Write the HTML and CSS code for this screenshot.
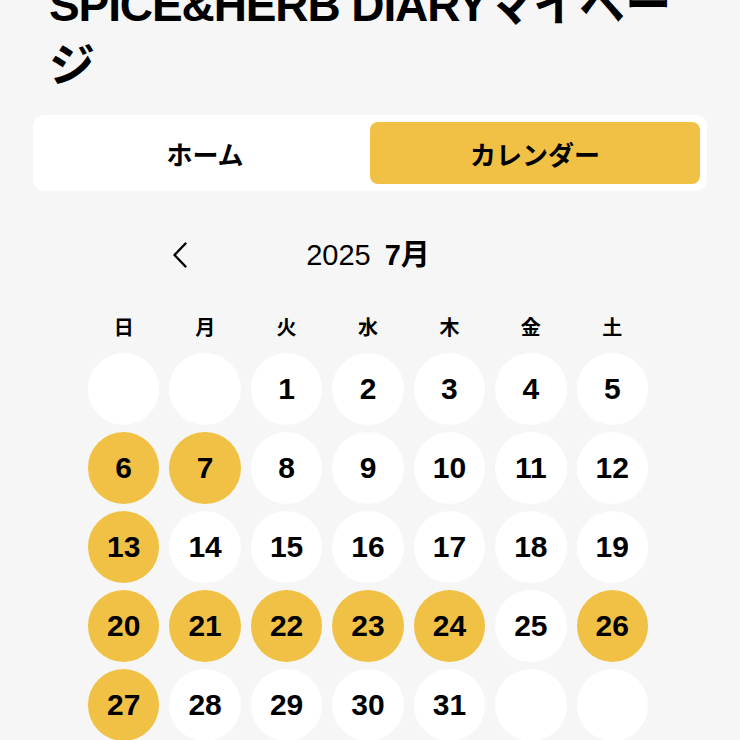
FILE: index.html
```html
<!DOCTYPE html>
<html lang="ja">
<head>
<meta charset="utf-8">
<title>SPICE&amp;HERB DIARYマイページ</title>
<link rel="stylesheet" href="styles.css">
</head>
<body>
<main class="page">
  <h1 class="page-title"><span class="latin">SPICE&amp;HERB DIARY</span>マイページ</h1>

  <nav class="tabs">
    <button class="tab">ホーム</button>
    <button class="tab tab-active">カレンダー</button>
  </nav>

  <section class="calendar">
    <div class="cal-header">
      <button class="cal-prev" aria-label="前の月">
        <svg width="16" height="26" viewBox="0 0 16 26"><polyline points="13.5,1.5 2.5,13 13.5,24.5" fill="none" stroke="#000" stroke-width="2.4" stroke-linecap="round" stroke-linejoin="round"/></svg>
      </button>
      <div class="cal-title"><span class="cal-year">2025</span><span class="cal-month">7月</span></div>
      <div></div>
    </div>

    <div class="weekdays">
      <span>日</span><span>月</span><span>火</span><span>水</span><span>木</span><span>金</span><span>土</span>
    </div>

    <div class="days">
      <div class="day"></div>
      <div class="day"></div>
      <div class="day">1</div>
      <div class="day">2</div>
      <div class="day">3</div>
      <div class="day">4</div>
      <div class="day">5</div>
      <div class="day day-on">6</div>
      <div class="day day-on">7</div>
      <div class="day">8</div>
      <div class="day">9</div>
      <div class="day">10</div>
      <div class="day">11</div>
      <div class="day">12</div>
      <div class="day day-on">13</div>
      <div class="day">14</div>
      <div class="day">15</div>
      <div class="day">16</div>
      <div class="day">17</div>
      <div class="day">18</div>
      <div class="day">19</div>
      <div class="day day-on">20</div>
      <div class="day day-on">21</div>
      <div class="day day-on">22</div>
      <div class="day day-on">23</div>
      <div class="day day-on">24</div>
      <div class="day">25</div>
      <div class="day day-on">26</div>
      <div class="day day-on">27</div>
      <div class="day">28</div>
      <div class="day">29</div>
      <div class="day">30</div>
      <div class="day">31</div>
      <div class="day"></div>
      <div class="day"></div>
    </div>
  </section>
</main>
</body>
</html>
```

FILE: styles.css
```css
html {
  background: #f6f6f6;
}

body {
  margin: 0;
  background: #f6f6f6;
  color: #000;
  font-family: "Liberation Sans", "Noto Sans CJK JP", sans-serif;
}

.page {
  padding: 0 33px 40px;
}

.page-title {
  margin: -25px 0 0;
  padding: 0 16px;
  font-size: 46px;
  line-height: 60px;
  font-weight: 700;
}

.page-title .latin {
  letter-spacing: -1.1px;
}

.tabs {
  margin-top: 20px;
  display: flex;
  padding: 7px;
  background: #fff;
  border-radius: 12px;
}

.tab {
  flex: 1;
  height: 62px;
  border: 0;
  border-radius: 8px;
  background: transparent;
  color: #000;
  font-family: "Noto Sans CJK JP", sans-serif;
  font-size: 26px;
  font-weight: 700;
  padding: 0;
}

.tab-active {
  background: #f0c144;
}

.calendar {
  padding: 0 59px 0 55px;
}

.cal-header {
  margin-top: 42px;
  height: 44px;
  display: grid;
  grid-template-columns: 1fr auto 1fr;
  align-items: center;
}

.cal-prev {
  justify-self: start;
  margin-left: 72px;
  width: 40px;
  height: 44px;
  padding: 0;
  border: 0;
  background: transparent;
  display: flex;
  align-items: center;
  justify-content: center;
}

.cal-title {
  display: flex;
  align-items: center;
  gap: 14px;
  font-size: 29px;
  line-height: 44px;
}

.cal-year {
  font-weight: 400;
}

.cal-month {
  font-weight: 700;
}

.weekdays {
  margin-top: 37px;
  display: grid;
  grid-template-columns: repeat(7, 1fr);
  column-gap: 10px;
  font-size: 20px;
  line-height: 28px;
  font-weight: 700;
  text-align: center;
}

.days {
  margin-top: 11px;
  display: grid;
  grid-template-columns: repeat(7, 1fr);
  grid-auto-rows: 72px;
  column-gap: 10px;
  row-gap: 7px;
}

.day {
  display: flex;
  align-items: center;
  justify-content: center;
  background: #fff;
  border-radius: 50%;
  font-size: 30px;
  line-height: 1;
  font-weight: 700;
}

.day-on {
  background: #f0c144;
}
```
